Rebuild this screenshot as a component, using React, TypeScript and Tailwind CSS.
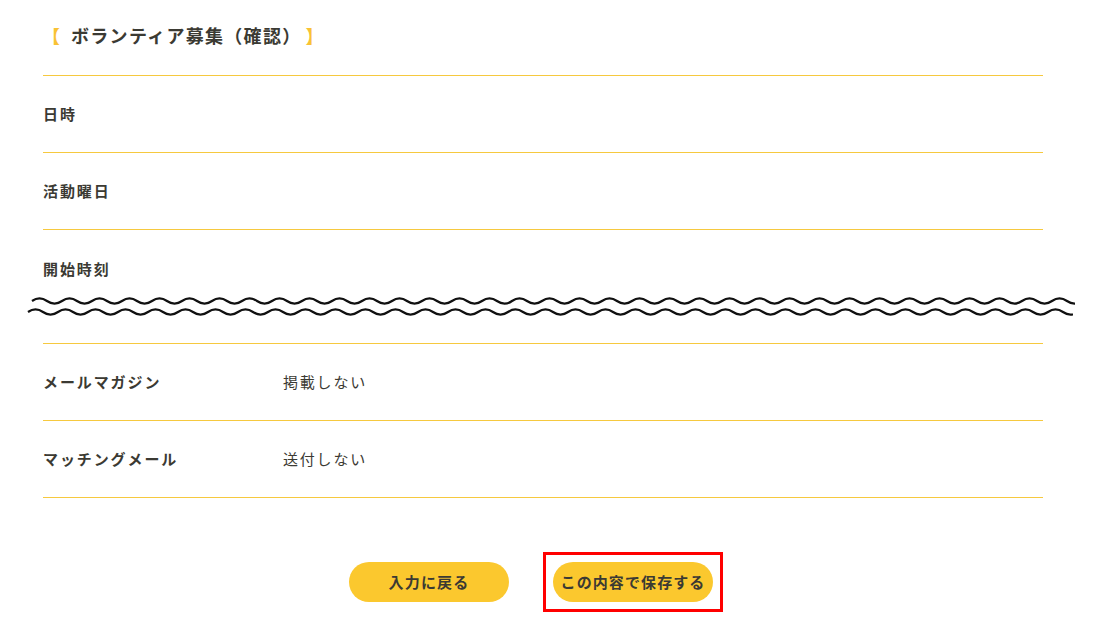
import React from "react";

const FONT = { fontFamily: '"Noto Sans CJK JP", "Noto Sans", sans-serif' };

// wavy "cut" line built from quadratic curves
function wavePath(x0: number, x1: number, y: number, period = 30, amp = 2.6) {
  const half = period / 2;
  let d = `M ${x0} ${y}`;
  let up = true;
  for (let x = x0; x < x1; x += half) {
    const cx = x + half / 2;
    d += ` Q ${cx} ${up ? y - amp * 2 : y + amp * 2} ${x + half} ${y}`;
    up = !up;
  }
  return d;
}

type Row = { label: string; value?: string };

function InfoRow({ label, value }: Row) {
  return (
    <div className="flex h-[77px] items-center border-b border-[#f6c93f]">
      <div className="w-[240px] text-[15px] font-bold tracking-[1.9px] text-[#3b3a33]">{label}</div>
      {value && <div className="text-[15px] tracking-[1.8px] text-[#3b3a33]">{value}</div>}
    </div>
  );
}

export default function App() {
  return (
    <div className="min-h-[633px] bg-white" style={FONT}>
      <div className="ml-[43px] w-[1000px]">
        {/* title */}
        <div className="flex h-[76px] items-start border-b border-[#f6c93f] pt-[23px]">
          <h1 className="-ml-[1px] text-[18px] font-bold leading-[24px] text-[#3b3a33]">
            <span className="text-[#f9c234]">【</span>
            <span className="ml-[11px] tracking-[1.3px]">ボランティア募集（確認）</span>
            <span className="ml-[13px] text-[#f9c234]">】</span>
          </h1>
        </div>

        <InfoRow label="日時" />
        <InfoRow label="活動曜日" />

        {/* cut-off row */}
        <div className="h-[60px] pt-[28px]">
          <div className="text-[15px] font-bold leading-[22px] tracking-[1.9px] text-[#3b3a33]">開始時刻</div>
        </div>
        <svg width="1052" height="30" viewBox="0 0 1052 30" className="-ml-[16px] block">
          <defs>
            <clipPath id="cut1">
              <rect x="0" y="0" width="1048" height="17" />
            </clipPath>
            <clipPath id="cut2">
              <rect x="0" y="17" width="1046" height="13" />
            </clipPath>
          </defs>
          <path d={wavePath(5, 1048, 11)} clipPath="url(#cut1)" fill="none" stroke="#111" strokeWidth="2.2" />
          <path d={wavePath(1, 1046, 22)} clipPath="url(#cut2)" fill="none" stroke="#111" strokeWidth="2.2" />
        </svg>
        <div className="h-[24px] border-b border-[#f6c93f]" />

        <InfoRow label="メールマガジン" value="掲載しない" />
        <InfoRow label="マッチングメール" value="送付しない" />

        {/* actions */}
        <div className="mt-[64px] flex gap-[44px] pl-[306px]">
          <button className="h-[40px] w-[160px] rounded-full bg-[#fbc82e] text-[15px] font-bold tracking-[1.2px] text-[#3b3a33]">
            入力に戻る
          </button>
          <div className="relative">
            <button className="h-[40px] w-[160px] rounded-full bg-[#fbc82e] text-[15px] font-bold tracking-[1.1px] text-[#3b3a33]">
              この内容で保存する
            </button>
            <span className="pointer-events-none absolute -inset-[10px] border-[3px] border-[#ff0000]" />
          </div>
        </div>
      </div>
    </div>
  );
}
